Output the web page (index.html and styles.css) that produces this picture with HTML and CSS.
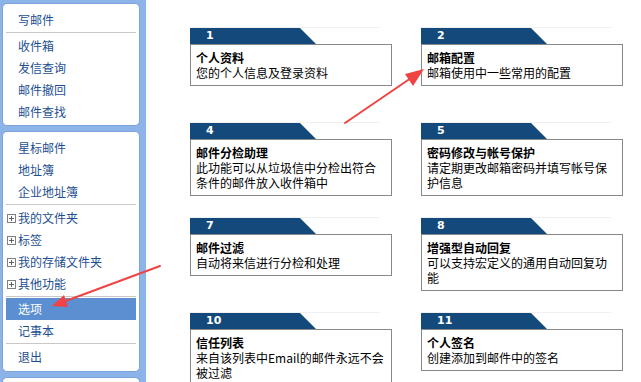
FILE: index.html
```html
<!DOCTYPE html>
<html lang="zh-CN">
<head>
    <meta charset="UTF-8">
    <meta name="viewport" content="width=device-width, initial-scale=1.0">
    <title>选项</title>
    <link rel="stylesheet" href="styles.css">
</head>
<body>

    <div class="layout">
        <div class="sidebar">
            <div class="panel panel-top">
                <ul class="menu">
                    <li><a href="#">写邮件</a></li>
                </ul>
                <div class="sep"></div>
                <ul class="menu">
                    <li><a href="#">收件箱</a></li>
                    <li><a href="#">发信查询</a></li>
                    <li><a href="#">邮件撤回</a></li>
                    <li><a href="#">邮件查找</a></li>
                </ul>
            </div>

            <div class="panel panel-main">
                <ul class="menu">
                    <li><a href="#">星标邮件</a></li>
                    <li><a href="#">地址簿</a></li>
                    <li><a href="#">企业地址簿</a></li>
                </ul>
                <div class="sep"></div>
                <ul class="menu tree">
                    <li><span class="plus"></span><a href="#">我的文件夹</a></li>
                    <li><span class="plus"></span><a href="#">标签</a></li>
                    <li><span class="plus"></span><a href="#">我的存储文件夹</a></li>
                    <li><span class="plus"></span><a href="#">其他功能</a></li>
                </ul>
                <div class="sep sep-tight"></div>
                <ul class="menu">
                    <li class="active"><a href="#">选项</a></li>
                    <li><a href="#">记事本</a></li>
                </ul>
                <div class="sep"></div>
                <ul class="menu">
                    <li><a href="#">退出</a></li>
                </ul>
            </div>

            <div class="panel panel-more"></div>
        </div>

        <div class="main">
            <div class="options">
                <div class="card">
                    <div class="card-head"><span class="tab">1</span></div>
                    <div class="card-body">
                        <div class="card-title">个人资料</div>
                        <div class="card-desc">您的个人信息及登录资料</div>
                    </div>
                </div>
                <div class="card">
                    <div class="card-head"><span class="tab">2</span></div>
                    <div class="card-body">
                        <div class="card-title">邮箱配置</div>
                        <div class="card-desc">邮箱使用中一些常用的配置</div>
                    </div>
                </div>
                <div class="card">
                    <div class="card-head"><span class="tab">4</span></div>
                    <div class="card-body">
                        <div class="card-title">邮件分检助理</div>
                        <div class="card-desc">此功能可以从垃圾信中分检出符合条件的邮件放入收件箱中</div>
                    </div>
                </div>
                <div class="card">
                    <div class="card-head"><span class="tab">5</span></div>
                    <div class="card-body">
                        <div class="card-title">密码修改与帐号保护</div>
                        <div class="card-desc">请定期更改邮箱密码并填写帐号保护信息</div>
                    </div>
                </div>
                <div class="card">
                    <div class="card-head"><span class="tab">7</span></div>
                    <div class="card-body">
                        <div class="card-title">邮件过滤</div>
                        <div class="card-desc">自动将来信进行分检和处理</div>
                    </div>
                </div>
                <div class="card">
                    <div class="card-head"><span class="tab">8</span></div>
                    <div class="card-body">
                        <div class="card-title">增强型自动回复</div>
                        <div class="card-desc">可以支持宏定义的通用自动回复功能</div>
                    </div>
                </div>
                <div class="card">
                    <div class="card-head"><span class="tab">10</span></div>
                    <div class="card-body">
                        <div class="card-title">信任列表</div>
                        <div class="card-desc">来自该列表中Email的邮件永远不会被过滤</div>
                    </div>
                </div>
                <div class="card">
                    <div class="card-head"><span class="tab">11</span></div>
                    <div class="card-body">
                        <div class="card-title">个人签名</div>
                        <div class="card-desc">创建添加到邮件中的签名</div>
                    </div>
                </div>
            </div>
        </div>
    </div>

    <!-- annotation arrows drawn over the page -->
    <svg class="arrows" width="641" height="382" viewBox="0 0 641 382">
        <g stroke="#f04444" stroke-width="2" fill="#f04444" stroke-linecap="round">
            <line x1="345" y1="123" x2="414" y2="76"/>
            <polygon points="424,69 405,74 413,86" stroke="none"/>
            <line x1="160" y1="266" x2="63" y2="302"/>
            <polygon points="52,306 64,295 68,307" stroke="none"/>
        </g>
    </svg>

</body>
</html>
```

FILE: styles.css
```css
body {
    margin: 0;
    height: 382px;
    overflow: hidden;
    background: #fff;
    font-family: "Noto Sans CJK SC", "Liberation Sans", sans-serif;
    font-size: 12px;
}
.layout {
    display: flex;
    height: 382px;
    overflow: hidden;
}
.sidebar {
    width: 146px;
    flex-shrink: 0;
    box-sizing: border-box;
    padding: 3px 6px 0 2px;
    background: #8db4e8;
    overflow: hidden;
}
.panel {
    background: #fff;
    border: 1px solid #7ba3dc;
    border-radius: 5px;
    padding: 5px 3px 2px;
    margin-bottom: 5px;
}
.panel-main {
    padding-bottom: 3px;
}
.panel-more {
    height: 3px;
    margin-bottom: 0;
    border-bottom: none;
    border-radius: 5px 5px 0 0;
}
.menu {
    list-style: none;
    margin: 0;
    padding: 0;
}
.menu li {
    display: flex;
    align-items: center;
    height: 22px;
    padding-left: 12px;
}
.menu a {
    color: #1d4f92;
    text-decoration: none;
    line-height: 22px;
}
.menu li.active {
    background: #5b8fd1;
}
.menu li.active a {
    color: #fff;
}
.tree li {
    padding-left: 1px;
}
.plus {
    position: relative;
    width: 7px;
    height: 7px;
    border: 1px solid #808080;
    margin-right: 2px;
}
.plus::before,
.plus::after {
    content: "";
    position: absolute;
    background: #606060;
}
.plus::before {
    left: 1px;
    top: 3px;
    width: 5px;
    height: 1px;
}
.plus::after {
    left: 3px;
    top: 1px;
    width: 1px;
    height: 5px;
}
.sep {
    height: 1px;
    background: #c8c8c8;
    margin: 1px 0 2px;
}
.sep-tight {
    margin-bottom: 1px;
}
.main {
    flex: 1;
    padding: 27px 0 0 44px;
}
.options {
    display: grid;
    grid-template-columns: 202px 202px;
    grid-auto-rows: 95px;
    column-gap: 29px;
}
.card-head {
    width: 190px;
    border-top: 1px solid #f0f0f0;
}
.tab {
    display: block;
    width: 126px;
    height: 16px;
    box-sizing: border-box;
    padding-left: 16px;
    background: #134a7b;
    clip-path: polygon(0 0, 110px 0, 126px 100%, 0 100%);
    color: #fff;
    font-family: "DejaVu Sans", sans-serif;
    font-weight: bold;
    font-size: 11px;
    line-height: 16px;
}
.card-body {
    border: 1px solid #888;
    padding: 5px;
    line-height: 15px;
    color: #000;
}
.card-title {
    font-weight: bold;
}
.arrows {
    position: absolute;
    top: 0;
    left: 0;
    pointer-events: none;
}
```
